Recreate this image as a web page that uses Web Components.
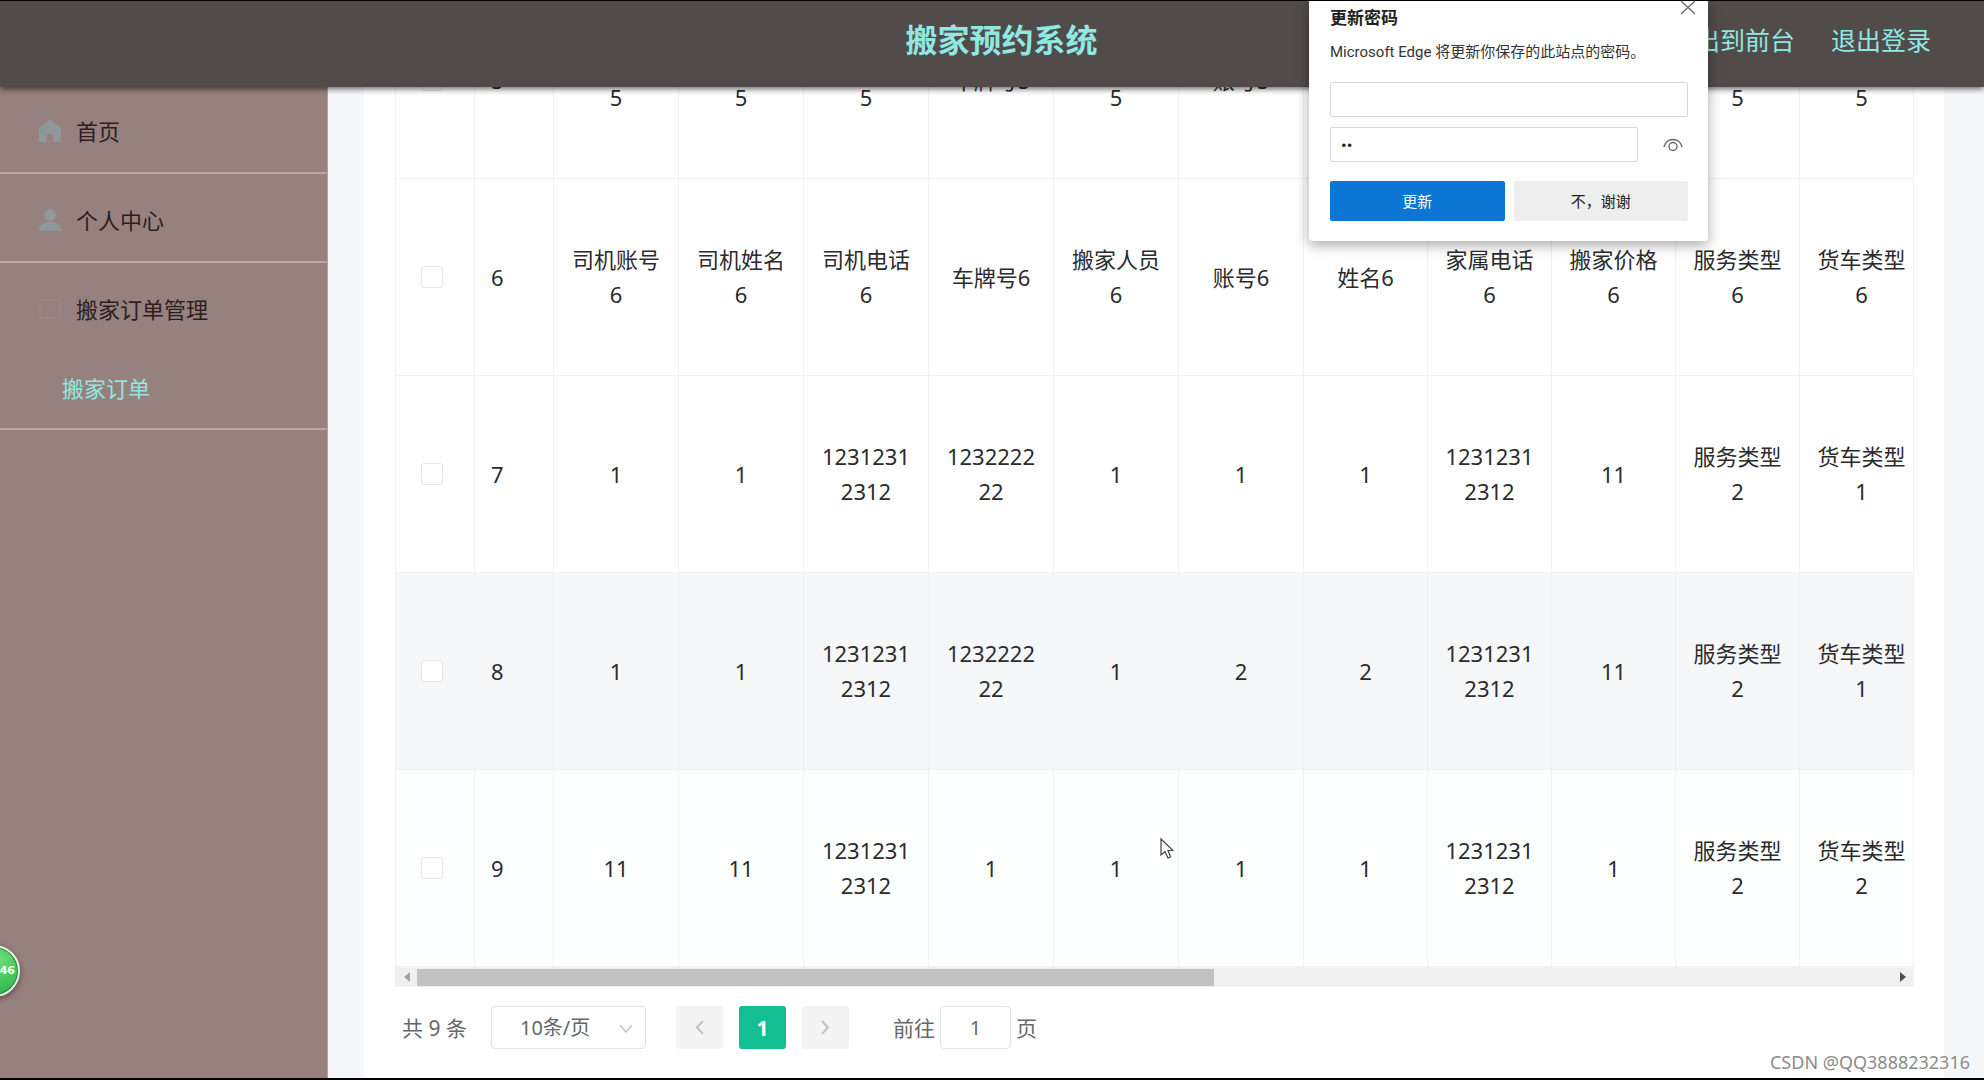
<!DOCTYPE html>
<html lang="zh-CN">
<head>
<meta charset="utf-8">
<title>搬家预约系统</title>
<style>
html, body { margin: 0; height: 100%; }
body { font-family: "Noto Sans", "Noto Sans CJK SC", sans-serif; background: #000; overflow: hidden; }
</style>
</head>
<body>
<moving-app></moving-app>
<script>
function define(name, html, setup) {
  const template = document.createElement('template');
  template.innerHTML = '<style>:host,*{box-sizing:border-box}input,select,button{font-family:inherit;margin:0}</style>' + html;
  customElements.define(name, class extends HTMLElement {
    constructor() {
      super();
      this.attachShadow({ mode: 'open' }).appendChild(template.content.cloneNode(true));
    }
    connectedCallback() { if (setup) setup(this.shadowRoot, this); }
  });
}

/* Top bar: system name in the middle, slotted links on the right */
define('top-bar', `
<style>
:host { display: grid; grid-template-columns: 1fr auto 1fr; align-items: center; flex: none; height: 86px; margin-bottom: -2px; padding: 0 53px 8px 72px;
  background: #514b4a; color: #8fe8e1; box-shadow: 0 2px 6px rgba(0,0,0,.6); position: relative; z-index: 2; }
h1 { grid-column: 2; margin: 0; font-size: 32px; line-height: 40px; font-weight: 700; }
nav { justify-self: end; display: flex; gap: 36px; font-size: 25px; line-height: 36px; white-space: nowrap; }
::slotted(a) { color: inherit; text-decoration: none; }
</style>
<h1><slot name="title"></slot></h1>
<nav><slot></slot></nav>`);

/* One entry of the side menu, with optional sub entries in its slot */
const icons = {
  home: '<path fill="#8e9899" d="M11 0 22 8V22H14V14H8V22H0V8Z"/>',
  user: '<circle cx="11" cy="6" r="6" fill="#8e9899"/><path fill="#8e9899" d="M0 22C0 15 5 13 11 13S22 15 22 22Z"/>',
  list: '<rect x="1" y="2" width="20" height="18" fill="none" stroke="#a08b8b" stroke-width="1"/>'
};
define('menu-entry', `
<style>
:host { display: block; border-bottom: 2px solid #bba8a6; }
.head { display: flex; align-items: center; gap: 15px; height: 87px; padding: 4px 30px 0 39px; color: #2d1e1e;
  font-size: 22px; line-height: 32px; text-decoration: none; }
.label { flex: 1; }
svg { width: 22px; height: 22px; flex: none; }
.arrow { width: 12px; height: 8px; display: none; }
:host([folds]) .arrow { display: block; }
</style>
<a class="head" href="#"><svg class="icon" viewBox="0 0 22 22"></svg><span class="label"></span>
<svg class="arrow" viewBox="0 0 12 8"><path d="M1 1 6 6 11 1" fill="none" stroke="#9d8886" stroke-width="1"/></svg></a>
<slot></slot>`, (root, host) => {
  root.querySelector('.icon').innerHTML = icons[host.getAttribute('icon')];
  root.querySelector('.label').textContent = host.getAttribute('label');
});
define('menu-sub', `
<style>
:host { display: block; }
a { display: flex; align-items: center; height: 78px; padding: 0 0 2px 62px; color: #8fe8e1; font-size: 22px; line-height: 32px; text-decoration: none; }
</style>
<a href="#"><slot></slot></a>`);
define('side-menu', `
<style>
:host { display: block; width: 328px; flex: none; background: #97817e; border-right: 1px solid #b3a19f; }
</style>
<nav><slot></slot></nav>`);

/* Orders table with its horizontal scroll bar */
const six = n => [n, '司机账号' + n, '司机姓名' + n, '司机电话' + n, '车牌号' + n, '搬家人员' + n, '账号' + n, '姓名' + n, '家属电话' + n, '搬家价格' + n, '服务类型' + n, '货车类型' + n];
const orders = [
  six(5), six(6),
  [7, '1', '1', '12312312312', '123222222', '1', '1', '1', '12312312312', '11', '服务类型2', '货车类型1'],
  [8, '1', '1', '12312312312', '123222222', '1', '2', '2', '12312312312', '11', '服务类型2', '货车类型1'],
  [9, '11', '11', '12312312312', '1', '1', '1', '1', '12312312312', '1', '服务类型2', '货车类型2']
];
define('order-table', `
<style>
:host { display: block; border: 1px solid #f1f1f3; border-width: 0 1px; }
.view { overflow: hidden; }
table { table-layout: fixed; width: 1528px; border-collapse: separate; border-spacing: 0; }
col.narrow { width: 79px; } col.wide { width: 125px; } col.mid { width: 124px; }
td { height: 197px; padding: 0 14px; border: 1px solid #f1f1f3; border-width: 0 1px 1px 0; text-align: center; vertical-align: middle;
  font-size: 22px; line-height: 35px; color: #2b2b2e; word-break: break-all; }
td:nth-child(-n+2) { text-align: left; padding-left: 16px; }
td:first-child { padding: 0 0 0 25px; }
tr:nth-child(4) td { background: #f6f7f9; }
tr:nth-child(5) td { background: #fdfffe; }
input { appearance: none; display: block; width: 22px; height: 22px; border: 1px solid #e4e5e9; border-radius: 3px; background: #fff; }
.bar { display: flex; align-items: center; height: 20px; background: #f0f0f1; }
.bar svg { width: 21px; height: 12px; flex: none; }
.track { flex: 1; height: 17px; }
.thumb { width: 54%; height: 17px; background: #c1c1c2; }
</style>
<div class="view"><table><colgroup></colgroup><tbody></tbody></table></div>
<div class="bar"><svg viewBox="0 0 21 12"><path d="M14 1V11L8 6Z" fill="#a3a3a3"/></svg><div class="track"><div class="thumb"></div></div>
<svg viewBox="0 0 21 12"><path d="M8 1V11L14 6Z" fill="#505050"/></svg></div>`, root => {
  const kinds = ['narrow', 'narrow', ...Array(6).fill('wide'), ...Array(5).fill('mid')];
  root.querySelector('colgroup').innerHTML = kinds.map(k => `<col class="${k}">`).join('');
  root.querySelector('tbody').innerHTML = orders.map(r =>
    `<tr><td><input type="checkbox" aria-label="选择 ${r[0]}"></td>${r.map(c => `<td>${c}</td>`).join('')}</tr>`).join('');
});

define('page-bar', `
<style>
:host { display: flex; align-items: center; height: 43px; padding-left: 7px; font-size: 21px; line-height: 32px; color: #66676a; white-space: nowrap; }
.size { position: relative; margin-left: 24px; }
select { appearance: none; display: block; width: 155px; height: 43px; padding: 0 0 0 28px; border: 1px solid #e1e2e6; border-radius: 4px; background: #fff; color: inherit; font-size: 20px; }
.size svg { position: absolute; right: 13px; top: 18px; width: 14px; height: 9px; pointer-events: none; }
.pages { display: flex; gap: 16px; margin-left: 30px; }
button { display: flex; align-items: center; justify-content: center; width: 47px; height: 43px; padding: 0; border: 0; border-radius: 3px; background: #f4f4f5; color: #fff; font-size: 21px; font-weight: 700; }
button.on { background: #13bf92; }
button svg { width: 9px; height: 15px; }
label { display: flex; align-items: center; gap: 5px; margin-left: 44px; }
label input { width: 71px; height: 43px; padding: 0; border: 1px solid #e1e2e6; border-radius: 4px; text-align: center; color: inherit; font-size: 20px; }
</style>
<span>共 9 条</span>
<div class="size"><select aria-label="每页条数"><option>10条/页</option></select>
<svg viewBox="0 0 14 9"><path d="M1 1 7 8 13 1" fill="none" stroke="#c3c6cc" stroke-width="1.5"/></svg></div>
<div class="pages">
<button aria-label="上一页"><svg viewBox="0 0 9 15"><path d="M8 1 2 7.5 8 14" fill="none" stroke="#bfc1c6" stroke-width="2"/></svg></button>
<button class="on">1</button>
<button aria-label="下一页"><svg viewBox="0 0 9 15"><path d="M1 1 7 7.5 1 14" fill="none" stroke="#bfc1c6" stroke-width="2"/></svg></button>
</div>
<label>前往<input type="text" value="1">页</label>`);

/* Browser prompt that offers to update a saved password */
define('password-prompt', `
<style>
:host { display: block; position: absolute; z-index: 3; top: 0; right: 276px; width: 399px; height: 240px; padding: 4px 20px 20px 21px;
  background: #fff; border-radius: 0 0 4px 4px; box-shadow: 0 4px 14px rgba(0,0,0,.35); font-family: Roboto, "Noto Sans CJK SC", sans-serif; font-size: 15px; color: #333; }
h2 { margin: 0; font-size: 17px; line-height: 26px; font-weight: 700; color: #222; }
p { margin: 9px 0 18px; line-height: 24px; white-space: nowrap; }
.close { position: absolute; top: 0; right: 12px; width: 16px; height: 14px; padding: 0; border: 0; background: none; }
svg { display: block; }
input { display: block; width: 100%; height: 35px; padding: 0 10px; border: 1px solid #d8d8d8; border-radius: 2px; background: #fff; color: #222; font-size: 15px; }
.row { display: flex; align-items: center; gap: 25px; margin: 10px 0 19px; }
.row input { flex: 1; font-size: 17px; }
.eye { width: 20px; height: 16px; padding: 0; border: 0; background: none; margin-right: 5px; }
.actions { display: grid; grid-template-columns: 1fr 1fr; gap: 9px; }
.actions button { height: 40px; padding: 0 0 2px; border: 0; border-radius: 2px; font-size: 15px; background: #eee; color: #222; }
.actions .main { background: #0b76d4; color: #fff; }
</style>
<h2>更新密码</h2>
<button class="close" aria-label="关闭"><svg width="16" height="14" viewBox="0 0 16 14"><path d="M1 0 15 13M15 0 1 13" stroke="#666" stroke-width="1.3"/></svg></button>
<p>Microsoft Edge 将更新你保存的此站点的密码。</p>
<input type="text" aria-label="用户名">
<div class="row"><input type="password" value="12" aria-label="密码">
<button class="eye" aria-label="显示密码"><svg width="20" height="16" viewBox="0 0 20 16"><path d="M1 10C3 0 17 0 19 10" fill="none" stroke="#666" stroke-width="1.4"/><circle cx="10" cy="9.5" r="4" fill="none" stroke="#666" stroke-width="1.4"/></svg></button></div>
<div class="actions"><button class="main">更新</button><button>不，谢谢</button></div>`);

define('float-badge', `
<style>
:host { position: absolute; z-index: 3; left: -32px; top: 944px; display: flex; align-items: center; justify-content: flex-end; width: 52px; height: 52px; padding-right: 3px;
  border: 2px solid #e6efe4; border-radius: 50%; background: radial-gradient(circle at 60% 25%, #6fdc7c, #2fb848 75%); box-shadow: inset 0 0 0 1px #23813a, 0 2px 6px rgba(0,0,0,.45);
  font: 700 11px/14px "DejaVu Sans", sans-serif; color: #fff; }
</style>
<slot></slot>`);

define('moving-app', `
<style>
:host { display: flex; flex-direction: column; height: 100vh; border: solid #000; border-width: 1px 0 2px; position: relative; overflow: hidden; }
.body { flex: 1; display: flex; min-height: 0; }
main { flex: 1; min-width: 0; display: flex; padding: 0 40px 0 36px; background: #f6f7f9; }
.card { flex: 1; min-width: 0; display: flex; flex-direction: column; justify-content: flex-end; gap: 19px; padding: 0 30px 29px 31px; background: #fff; overflow: hidden; }
.mark { position: absolute; right: 14px; bottom: 3px; font-size: 18px; line-height: 26px; color: #8b8b8b; text-shadow: 1px 1px 0 #fff; }
.pointer { position: absolute; left: 1159px; top: 836px; }
</style>
<top-bar><span slot="title">搬家预约系统</span><a href="#">退出到前台</a><a href="#">退出登录</a></top-bar>
<div class="body">
<side-menu>
<menu-entry icon="home" label="首页"></menu-entry>
<menu-entry icon="user" label="个人中心" folds></menu-entry>
<menu-entry icon="list" label="搬家订单管理" folds><menu-sub>搬家订单</menu-sub></menu-entry>
</side-menu>
<main><div class="card"><order-table></order-table><page-bar></page-bar></div></main>
</div>
<password-prompt></password-prompt>
<float-badge>46</float-badge>
<svg class="pointer" width="15" height="23" viewBox="0 0 15 23"><path d="M2 2V18L6 14.500L9 21L11.500 20L9 13.500H14Z" fill="#fff" stroke="#444" stroke-width="1.2"/></svg>
<div class="mark">CSDN @QQ3888232316</div>`);
</script>
</body>
</html>
